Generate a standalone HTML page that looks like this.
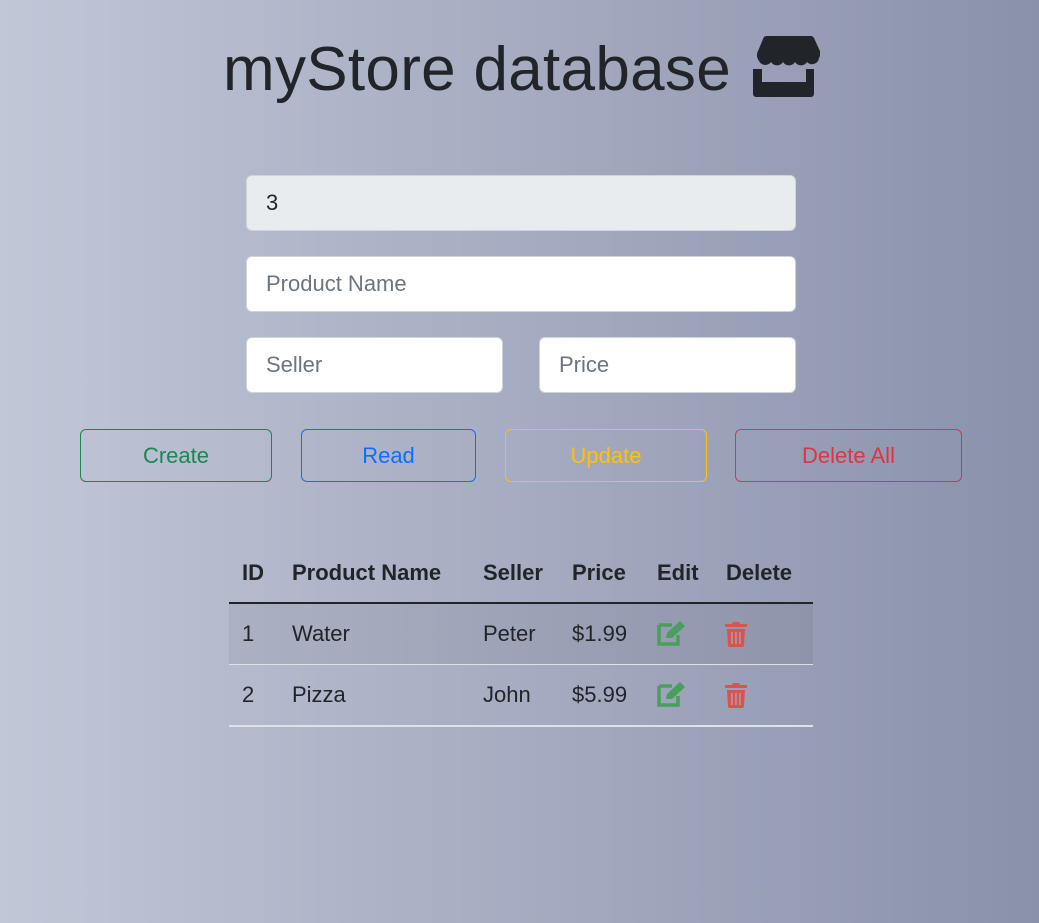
<!DOCTYPE html>
<html><head><style>
body{margin:0;width:1039px;height:923px;background:linear-gradient(to right,#c1c7d7,#8a91ab);font-family:"Liberation Sans",sans-serif;color:#212529;position:relative;overflow:hidden}
h1{position:absolute;left:223px;top:28px;margin:0;font-weight:normal;font-size:62px;line-height:84px;letter-spacing:0.3px}
.store{position:absolute;left:747px;top:36px}
.in{position:absolute;height:56px;border:1px solid #ced4da;border-radius:6px;background:#fff;box-sizing:border-box;font-size:22px;line-height:54px;padding-left:19px;color:#6c757d}
.b{position:absolute;top:429px;height:53px;box-sizing:border-box;border:1px solid;border-radius:6px;font-size:22px;line-height:51px;text-align:center}
.t{position:absolute;top:545px;left:229px;width:584px;font-size:22px}
.r{position:relative;height:60px}
.r div{position:absolute;top:0;line-height:60px}
</style></head><body>
<h1>myStore database</h1>
<svg class="store" width="73" height="62" viewBox="0 0 73 62"><path d="M8 0h55a4 4 0 0 1 4 2l5 11a9 9 0 0 1 0 9a7 7 0 0 1-12 4a7 7 0 0 1-12 0a7 7 0 0 1-12 0a7 7 0 0 1-12 0a7 7 0 0 1-12-1a9 9 0 0 1-1-10l5-12a4 4 0 0 1 4-3z" fill="#212529"/><path d="M6 33h9v13h44v-13h8v25a3 3 0 0 1-3 3h-55a3 3 0 0 1-3-3z" fill="#212529"/></svg>
<div class="in" style="left:246px;top:175px;width:550px;background:#e9ecef;color:#212529">3</div>
<div class="in" style="left:246px;top:256px;width:550px">Product Name</div>
<div class="in" style="left:246px;top:337px;width:257px">Seller</div>
<div class="in" style="left:539px;top:337px;width:257px">Price</div>
<div class="b" style="left:80px;width:192px;color:#198754;border-color:#198754">Create</div>
<div class="b" style="left:301px;width:175px;color:#0d6efd;border-color:#0d6efd">Read</div>
<div class="b" style="left:505px;width:202px;color:#ffc107;border-color:#ffc107">Update</div>
<div class="b" style="left:735px;width:227px;color:#dc3545;border-color:#dc3545">Delete All</div>
<div class="t">
<div class="r" style="height:57px;border-bottom:2px solid #212529;font-weight:bold"><div style="left:13px;line-height:56px">ID</div><div style="left:63px;line-height:56px">Product Name</div><div style="left:254px;line-height:56px">Seller</div><div style="left:343px;line-height:56px">Price</div><div style="left:428px;line-height:56px">Edit</div><div style="left:497px;line-height:56px">Delete</div></div>
<div class="r" style="background:rgba(0,0,0,.05);border-bottom:1px solid #dee2e6"><div style="left:13px">1</div><div style="left:63px">Water</div><div style="left:254px">Peter</div><div style="left:343px">$1.99</div>
<div style="left:427px;top:17px;line-height:0"><svg width="29" height="26" viewBox="0 0 29 26"><path d="M3 4h13M3 4v19h19v-9" stroke="#4a9e5c" stroke-width="3.5" fill="none"/><path d="M10 17l1-5 13-12 5 5-13 12z" fill="#4a9e5c"/></svg></div>
<div style="left:496px;top:17px;line-height:0"><svg width="22" height="26" viewBox="0 0 22 26"><path d="M0 3h7l1-2h6l1 2h7v3h-22z" fill="#d9534f"/><path d="M2 8h18l-1 16a2 2 0 0 1-2 2h-12a2 2 0 0 1-2-2z" fill="#d9534f"/><path d="M7 11v12M11 11v12M15 11v12" stroke="#a9a9b9" stroke-width="1.3"/></svg></div></div>
<div class="r" style="border-bottom:2px solid #dee2e6"><div style="left:13px">2</div><div style="left:63px">Pizza</div><div style="left:254px">John</div><div style="left:343px">$5.99</div>
<div style="left:427px;top:17px;line-height:0"><svg width="29" height="26" viewBox="0 0 29 26"><path d="M3 4h13M3 4v19h19v-9" stroke="#4a9e5c" stroke-width="3.5" fill="none"/><path d="M10 17l1-5 13-12 5 5-13 12z" fill="#4a9e5c"/></svg></div>
<div style="left:496px;top:17px;line-height:0"><svg width="22" height="26" viewBox="0 0 22 26"><path d="M0 3h7l1-2h6l1 2h7v3h-22z" fill="#d9534f"/><path d="M2 8h18l-1 16a2 2 0 0 1-2 2h-12a2 2 0 0 1-2-2z" fill="#d9534f"/><path d="M7 11v12M11 11v12M15 11v12" stroke="#a9a9b9" stroke-width="1.3"/></svg></div></div>
</div>
</body></html>
